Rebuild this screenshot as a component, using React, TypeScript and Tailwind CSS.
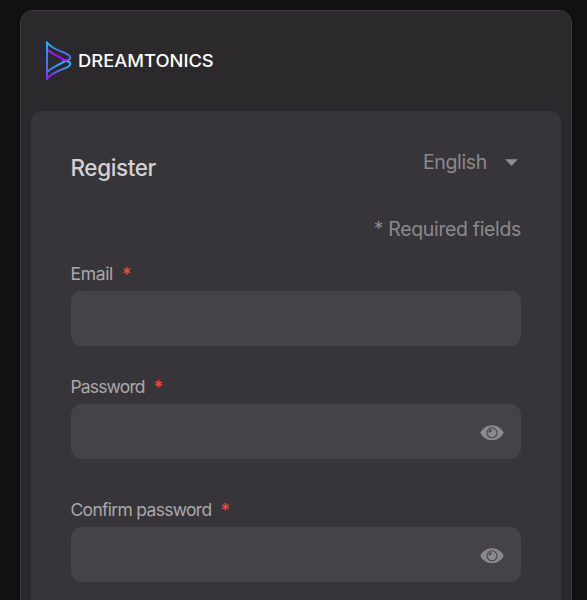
import { useState } from "react";

type FieldProps = {
  id: string;
  label: string;
  labelClass: string;
  secret?: boolean;
  className: string;
};

function Logo() {
  return (
    <svg width="27" height="42" viewBox="0 0 27 42" fill="none" strokeWidth="1.9" strokeLinejoin="round">
      <defs>
        <linearGradient id="side" x1="0" y1="0" x2="0" y2="42" gradientUnits="userSpaceOnUse">
          <stop offset="0" stopColor="#12c8f8" />
          <stop offset="0.3" stopColor="#3c83f5" />
          <stop offset="0.7" stopColor="#5a62f6" />
          <stop offset="1" stopColor="#a00cf8" />
        </linearGradient>
        <linearGradient id="upper" x1="2" y1="4" x2="26" y2="18" gradientUnits="userSpaceOnUse">
          <stop offset="0" stopColor="#18c0f8" />
          <stop offset="0.4" stopColor="#4080f5" />
          <stop offset="1" stopColor="#5a6cf5" />
        </linearGradient>
        <linearGradient id="lower" x1="2" y1="39" x2="26" y2="24" gradientUnits="userSpaceOnUse">
          <stop offset="0" stopColor="#a00cf8" />
          <stop offset="0.4" stopColor="#5a62f6" />
          <stop offset="1" stopColor="#20b4f8" />
        </linearGradient>
        <linearGradient id="innerTop" x1="2" y1="9" x2="21" y2="21" gradientUnits="userSpaceOnUse">
          <stop offset="0" stopColor="#8a30f6" />
          <stop offset="0.5" stopColor="#a010f5" />
          <stop offset="1" stopColor="#a010f5" />
        </linearGradient>
        <linearGradient id="innerBottom" x1="2" y1="33" x2="21" y2="21" gradientUnits="userSpaceOnUse">
          <stop offset="0" stopColor="#4c74f5" />
          <stop offset="1" stopColor="#16c4f8" />
        </linearGradient>
      </defs>
      <path d="M2 9.3C7 14 14 16.5 20.5 20.5" stroke="url(#innerTop)" />
      <path d="M2 32.1C7 27.4 14 25 20.5 20.9" stroke="url(#innerBottom)" />
      <path d="M2 2.5C7 9 15 10.8 22.5 14.3C27 16.7 26 20.2 20.5 20.4" stroke="url(#upper)" />
      <path d="M2 38.9C7 32.4 15 30.6 22.5 27.1C27 24.7 26 21.2 20.5 21" stroke="url(#lower)" />
      <path d="M2 1.4V40" stroke="url(#side)" strokeWidth="2" />
      <path d="M16.5 20.2H23" stroke="#a010f5" strokeWidth="1.4" />
    </svg>
  );
}

function EyeIcon() {
  return (
    <svg width="24" height="16" viewBox="0 0 24 16">
      <path d="M0.2 7.8C3 3 7 0.3 12 0.3S21 3 23.8 7.8C21 12.6 17 15.3 12 15.3S3 12.6 0.2 7.8Z" fill="#8a898c" />
      <circle cx="12" cy="7.8" r="5" fill="none" stroke="#454347" strokeWidth="1.1" />
      <path d="M8.6 7.5C8.7 5.3 10 4.2 11.7 4.3C12.1 6.1 11 7.7 8.6 7.5Z" fill="#454347" />
    </svg>
  );
}

function Field({ id, label, labelClass, secret, className }: FieldProps) {
  const [visible, setVisible] = useState(false);

  return (
    <div className={className}>
      <div className="flex h-6 items-center">
        <label htmlFor={id} className={`-ml-[0.5px] whitespace-nowrap text-[17.5px] text-[#a9a8aa] ${labelClass}`}>
          {label}
        </label>
        <span className="ml-[9px] pt-0.5 text-[18px] leading-6 font-medium text-[#f5493d]">*</span>
      </div>
      <div className="mt-[5px] flex h-[55px] items-center rounded-[11px] bg-[#454347] pr-[17px]">
        <input
          id={id}
          type={secret && !visible ? "password" : "text"}
          className="h-full min-w-0 flex-1 bg-transparent px-4 text-lg text-[#d2d2d2] outline-none"
        />
        {secret && (
          <button type="button" aria-label="Show password" onClick={() => setVisible(!visible)} className="mt-[3px]">
            <EyeIcon />
          </button>
        )}
      </div>
    </div>
  );
}

export default function App() {
  return (
    <div className="h-screen overflow-hidden bg-[#111111] pt-2.5 pr-[15px] pl-5 font-['Inter',sans-serif]">
      <div className="h-[640px] rounded-[13px] border border-[#3b3a3c] bg-[#2b292c] px-2.5">
        <header className="flex h-[100px] items-center pl-3.5">
          <Logo />
          <span className="ml-[6px] origin-left scale-x-[1.08] pt-0.5 text-[17px] font-medium text-white">
            DREAMTONICS
          </span>
        </header>
        <main className="h-[540px] rounded-t-[11px] bg-[#38353a] px-10 pt-9">
          <div className="flex h-[42px] justify-between">
            <h1 className="-ml-[0.5px] pt-[5px] text-[22.5px] leading-8 font-medium tracking-[-0.4px] text-[#d2d2d2]">
              Register
            </h1>
            <button type="button" className="mt-px flex h-[30px] items-center pr-[3px] text-[#8a898c]">
              <span className="text-[19.5px] tracking-[-0.35px]">English</span>
              <svg width="13" height="7" viewBox="0 0 13 7" className="mb-px ml-[18px]">
                <path d="M0.2 0.2H12.8L6.5 6.9Z" fill="#8f8e91" />
              </svg>
            </button>
          </div>
          <p className="mt-[25px] text-right text-[19.5px] leading-[30px] tracking-[-0.35px] text-[#8a898c]">
            * Required fields
          </p>
          <Field id="email" label="Email" labelClass="tracking-[-0.35px] pt-px" className="mt-[18px]" />
          <Field id="password" label="Password" labelClass="tracking-[-0.85px]" secret className="mt-[29px]" />
          <Field id="confirm" label="Confirm password" labelClass="tracking-[-0.7px]" secret className="mt-[39px]" />
        </main>
      </div>
    </div>
  );
}
